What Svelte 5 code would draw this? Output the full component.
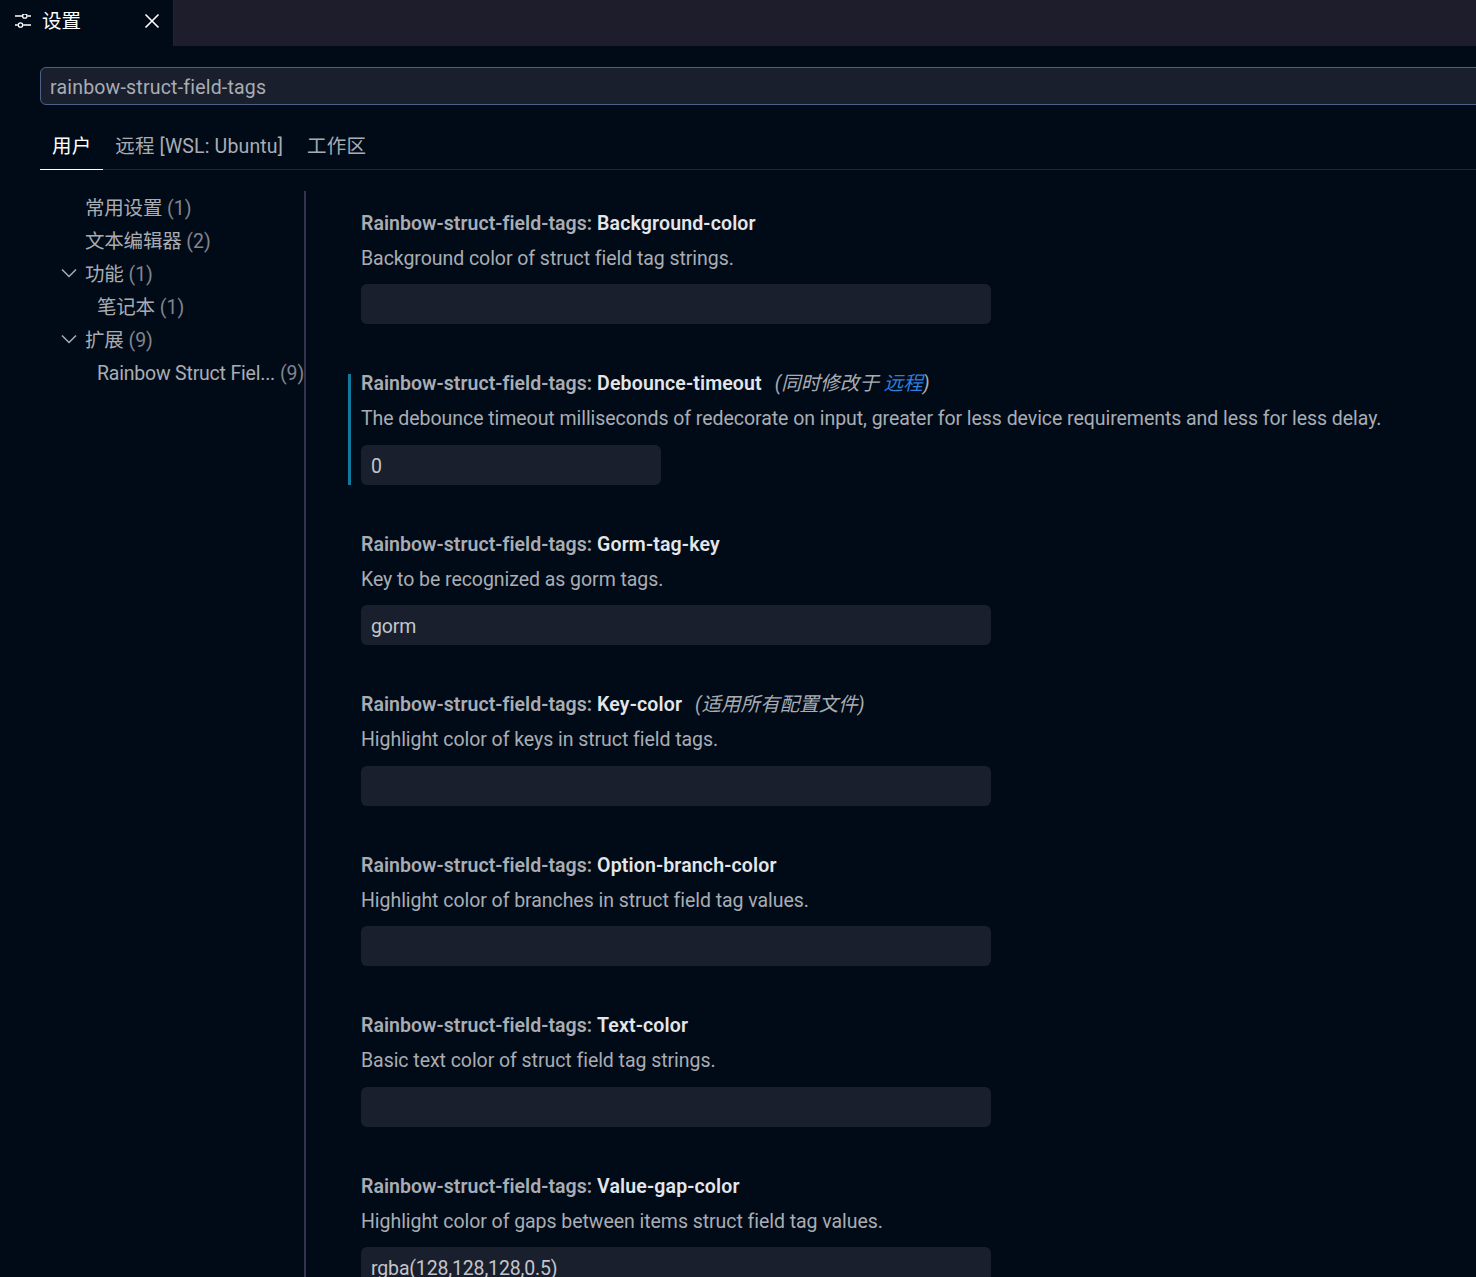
<script>
  const tree = [
    { label: '常用设置', count: 1, indent: 85 },
    { label: '文本编辑器', count: 2, indent: 85 },
    { label: '功能', count: 1, indent: 85, open: true },
    { label: '笔记本', count: 1, indent: 97 },
    { label: '扩展', count: 9, indent: 85, open: true },
    { label: 'Rainbow Struct Fiel...', count: 9, indent: 97 }
  ];

  const settings = [
    { key: 'Background-color', desc: 'Background color of struct field tag strings.', value: '' },
    {
      key: 'Debounce-timeout',
      desc: 'The debounce timeout milliseconds of redecorate on input, greater for less device requirements and less for less delay.',
      value: '0',
      modified: true,
      short: true
    },
    { key: 'Gorm-tag-key', desc: 'Key to be recognized as gorm tags.', value: 'gorm' },
    { key: 'Key-color', desc: 'Highlight color of keys in struct field tags.', value: '', scope: true },
    { key: 'Option-branch-color', desc: 'Highlight color of branches in struct field tag values.', value: '' },
    { key: 'Text-color', desc: 'Basic text color of struct field tag strings.', value: '' },
    { key: 'Value-gap-color', desc: 'Highlight color of gaps between items struct field tag values.', value: 'rgba(128,128,128,0.5)' }
  ];
</script>

<div class="page">
  <div class="tabbar">
    <div class="tab">
      <svg class="tab-icon" width="18" height="18" viewBox="0 0 18 18" fill="none" stroke="#fff" stroke-width="1.300">
        <path d="M0 2h7M12.500 2H16M0 11h2.800M8.200 11H16" />
        <circle cx="9.800" cy="2" r="2.200" />
        <circle cx="5.500" cy="11" r="2.200" />
      </svg>
      <span class="tab-title">设置</span>
      <svg class="tab-close" width="16" height="16" viewBox="0 0 16 16" fill="none" stroke="#fff" stroke-width="1.600">
        <path d="M1.500 1.500l13 13M14.500 1.500l-13 13" />
      </svg>
    </div>
  </div>

  <div class="search">rainbow-struct-field-tags</div>

  <div class="scopes">
    <span class="scope active">用户</span>
    <span class="scope">远程 [WSL: Ubuntu]</span>
    <span class="scope">工作区</span>
  </div>

  <div class="body">
    <div class="tree">
      {#each tree as node}
        <div class="node" style="padding-left: {node.indent}px">
          {#if node.open}
            <svg class="chevron" width="18" height="18" viewBox="0 0 18 18" fill="none" stroke="#a9adb3" stroke-width="1.500">
              <path d="M2 5.500l7 7 7-7" />
            </svg>
          {/if}
          <span class="node-label">{node.label}</span>
          <span class="node-count">({node.count})</span>
        </div>
      {/each}
    </div>

    <div class="list">
      {#each settings as item}
        <div class="item" class:modified={item.modified}>
          <div class="title">
            <span class="prefix">Rainbow-struct-field-tags:</span>
            <span class="key">{item.key}</span>
            {#if item.modified}
              <span class="note">(同时修改于 <span class="link">远程</span>)</span>
            {/if}
            {#if item.scope}
              <span class="note">(适用所有配置文件)</span>
            {/if}
          </div>
          <div class="desc">{item.desc}</div>
          <div class="input" class:short={item.short}>{item.value}</div>
        </div>
      {/each}
    </div>
  </div>
</div>

<style>
  :global(body) {
    margin: 0;
    background: #010b18;
  }

  .page {
    height: 1277px;
    overflow: hidden;
    background: #010b18;
    color: #a9adb3;
    font-family: Roboto, 'Noto Sans CJK SC', sans-serif;
    font-size: 19.500px;
  }

  .tabbar {
    height: 46px;
    background: #1d1d2b;
  }

  .tab {
    width: 174px;
    height: 46px;
    box-sizing: border-box;
    display: flex;
    align-items: center;
    padding-left: 15px;
    background: #010b18;
    border-right: 1px solid #1f2536;
    color: #fff;
  }

  .tab-icon {
    margin-right: 9px;
  }

  .tab-title {
    line-height: 43px;
    height: 46px;
  }

  .tab-close {
    margin-left: 63px;
    margin-top: -4px;
  }

  .search {
    width: 1600px;
    height: 38px;
    margin: 21px 0 0 40px;
    box-sizing: border-box;
    padding-left: 9px;
    line-height: 40px;
    letter-spacing: 0.200px;
    background: #1a1f2e;
    border: 1px solid #4c6188;
    border-radius: 6px;
  }

  .scopes {
    display: flex;
    height: 65px;
    margin-left: 40px;
    box-sizing: border-box;
    border-bottom: 1px solid #22273a;
  }

  .scope {
    padding: 24px 12px 0;
    line-height: 35px;
    letter-spacing: 0.150px;
    white-space: nowrap;
  }

  .scope.active {
    color: #fff;
    height: 65px;
    box-sizing: border-box;
    border-bottom: 1px solid #fff;
  }

  .body {
    display: flex;
    margin-top: 21px;
  }

  .tree {
    flex: none;
    width: 306px;
    height: 1100px;
    box-sizing: border-box;
    border-right: 2px solid #33334f;
  }

  .node {
    position: relative;
    height: 33px;
    line-height: 35px;
    white-space: nowrap;
  }

  .node-label {
    letter-spacing: -0.200px;
  }

  .chevron {
    position: absolute;
    left: 60px;
    top: 7px;
  }

  .node-count {
    color: #81858c;
  }

  .list {
    flex: 1;
    min-width: 0;
  }

  .item {
    height: 160.500px;
    box-sizing: border-box;
    padding: 22.600px 0 0 55px;
    position: relative;
  }

  .item.modified::before {
    content: '';
    position: absolute;
    left: 42px;
    top: 22px;
    width: 3px;
    height: 111px;
    background: #0f7a9c;
  }

  .title {
    line-height: 20px;
    font-weight: 600;
    letter-spacing: 0.050px;
    color: #a9adb3;
    white-space: nowrap;
  }

  .key {
    color: #e4e6ea;
    letter-spacing: 0.150px;
  }

  .note {
    font-weight: 400;
    font-style: italic;
    margin-left: 8px;
    color: #a9adb3;
  }

  .link {
    color: #2f7fdc;
  }

  .desc {
    margin-top: 15px;
    line-height: 20px;
    letter-spacing: -0.050px;
    white-space: nowrap;
  }

  .input {
    width: 630px;
    height: 40px;
    margin-top: 15.500px;
    box-sizing: border-box;
    padding-left: 10px;
    line-height: 44px;
    letter-spacing: -0.150px;
    background: #1a1f2e;
    border-radius: 6px;
    color: #c3c6cb;
  }

  .input.short {
    width: 300px;
  }
</style>
